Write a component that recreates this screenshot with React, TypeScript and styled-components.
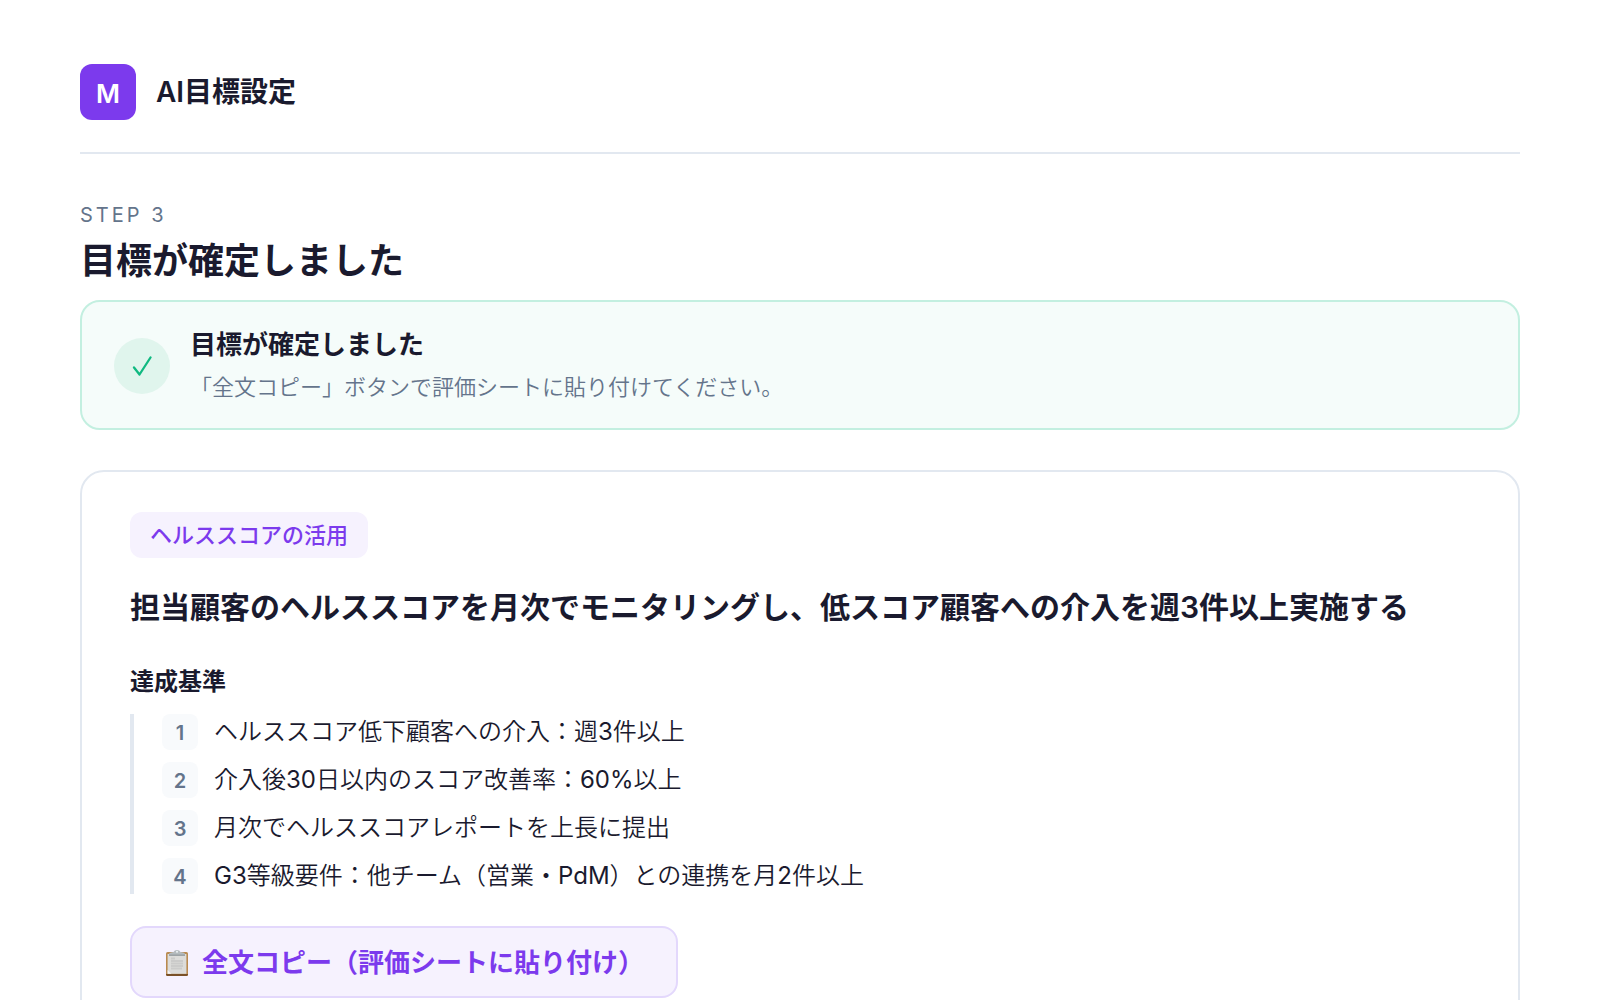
import React from 'react';
import styled, { createGlobalStyle } from 'styled-components';

const GlobalStyle = createGlobalStyle`
  *, *::before, *::after { box-sizing: border-box; }
  body {
    margin: 0;
    background: #ffffff;
    color: #1a1a2e;
    font-family: Inter, "Noto Sans CJK JP", sans-serif;
    -webkit-font-smoothing: antialiased;
  }
  h1, h2, h3, p, ol { margin: 0; padding: 0; }
`;

const Page = styled.div`
  padding: 64px 80px;
`;

const Header = styled.header`
  display: flex;
  align-items: center;
  gap: 20px;
  padding-bottom: 32px;
  border-bottom: 2px solid #e2e8f0;
`;

const Logo = styled.div`
  display: flex;
  align-items: center;
  justify-content: center;
  width: 56px;
  height: 56px;
  padding-top: 4px;
  border-radius: 12px;
  background: #7c3aed;
  color: #ffffff;
  font-size: 26px;
  line-height: 32px;
  font-weight: 600;
`;

const AppName = styled.p`
  font-size: 28px;
  line-height: 40px;
  font-weight: 600;
`;

const StepLabel = styled.p`
  margin-top: 48px;
  color: #64748b;
  font-size: 20px;
  line-height: 26px;
  letter-spacing: 3px;
`;

const PageTitle = styled.h1`
  margin-top: 9px;
  font-size: 36px;
  line-height: 48px;
  font-weight: 600;
`;

const Banner = styled.section`
  display: flex;
  align-items: center;
  gap: 20px;
  margin-top: 15px;
  padding: 25px 32px 24px;
  border: 2px solid #c3efe0;
  border-radius: 20px;
  background: #f5fcfa;
`;

const CheckCircle = styled.div`
  display: flex;
  align-items: center;
  justify-content: center;
  width: 56px;
  height: 56px;
  border-radius: 50%;
  background: #e0f5ed;
`;

const BannerTitle = styled.h2`
  font-size: 26px;
  line-height: 36px;
  font-weight: 600;
`;

const BannerText = styled.p`
  margin-top: 7px;
  color: #64748b;
  font-size: 22px;
  line-height: 34px;
  font-weight: 350;
`;

const Card = styled.article`
  display: flex;
  flex-direction: column;
  align-items: flex-start;
  margin-top: 40px;
  padding: 40px 48px;
  border: 2px solid #e2e8f0;
  border-radius: 24px;
`;

const Tag = styled.span`
  padding: 6px 20px;
  border-radius: 12px;
  background: #f6f2fe;
  color: #7c3aed;
  font-size: 22px;
  line-height: 34px;
  font-weight: 500;
`;

const GoalTitle = styled.h2`
  margin-top: 25px;
  font-size: 30px;
  line-height: 48px;
  font-weight: 600;
`;

const CriteriaLabel = styled.h3`
  margin-top: 33px;
  font-size: 24px;
  line-height: 36px;
  font-weight: 600;
`;

const CriteriaList = styled.ol`
  display: flex;
  flex-direction: column;
  gap: 12px;
  && {
    margin-top: 14px;
    padding-left: 28px;
  }
  border-left: 4px solid #e2e8f0;
  list-style: none;
`;

const Criterion = styled.li`
  display: flex;
  align-items: center;
  gap: 16px;
  font-size: 24px;
  line-height: 36px;
  font-weight: 350;
`;

const Latin = styled.span`
  font-weight: 400;
`;

const CriterionNumber = styled.span`
  width: 36px;
  height: 36px;
  padding-top: 1px;
  border-radius: 8px;
  background: #f8fafc;
  color: #64748b;
  font-size: 20px;
  font-weight: 600;
  text-align: center;
`;

const CopyButton = styled.button`
  display: flex;
  align-items: center;
  gap: 12px;
  margin-top: 32px;
  padding: 15px 32px 13px;
  border: 2px solid #e3d8fc;
  border-radius: 16px;
  background: #f6f2fe;
  color: #7c3aed;
  font-family: inherit;
  font-size: 26px;
  line-height: 40px;
  font-weight: 600;
  cursor: pointer;
`;

const criteria = [
  'ヘルススコア低下顧客への介入：週3件以上',
  '介入後30日以内のスコア改善率：60%以上',
  '月次でヘルススコアレポートを上長に提出',
  'G3等級要件：他チーム（営業・PdM）との連携を月2件以上',
];

const withLatin = (text: string) =>
  text
    .split(/([A-Za-z0-9%]+)/)
    .map((part, i) => (i % 2 === 1 ? <Latin key={i}>{part}</Latin> : part));

const CheckIcon = () => (
  <svg width="20" height="20" viewBox="0 0 20 20" fill="none" aria-hidden="true">
    <path
      d="M2 11.5 L7.5 18.5 L18.5 1.5"
      stroke="#10b981"
      strokeWidth="2.3"
      strokeLinecap="round"
      strokeLinejoin="round"
    />
  </svg>
);

const ClipboardIcon = () => (
  <svg width="26" height="28" viewBox="0 0 26 28" aria-hidden="true">
    <rect x="2" y="3" width="22" height="24" rx="1.6" fill="#b98a50" />
    <path d="M2 25h22v.6a1.4 1.4 0 0 1-1.4 1.4H3.4A1.4 1.4 0 0 1 2 25.6z" fill="#7a5128" />
    <rect x="3.6" y="5" width="18.8" height="19.8" fill="#dcdcda" />
    <path d="M3.6 21l3.8 3.8H3.6z" fill="#f4f4f2" />
    <path d="M7 9.500h4M7 12h12M7 14.500h12M7 17h12M7 19.500h11" stroke="#cbcbca" strokeWidth="1.8" />
    <path d="M5 6.500V5.200Q5 3.700 7 3.500L9.500 3Q10.500 1 13 1t3.500 2l2.500.5q2 .2 2 1.700v1.300z" fill="#b4bbbe" />
    <circle cx="13" cy="2.800" r="1" fill="#eef3f5" />
    <path d="M5 6.200h16" stroke="#7b8285" strokeWidth="0.8" />
  </svg>
);

export default function App() {
  return (
    <>
      <GlobalStyle />
      <Page lang="ja">
        <Header>
          <Logo>M</Logo>
          <AppName>AI目標設定</AppName>
        </Header>
        <main>
          <StepLabel>STEP 3</StepLabel>
          <PageTitle>目標が確定しました</PageTitle>
          <Banner role="status">
            <CheckCircle>
              <CheckIcon />
            </CheckCircle>
            <div>
              <BannerTitle>目標が確定しました</BannerTitle>
              <BannerText>「全文コピー」ボタンで評価シートに貼り付けてください。</BannerText>
            </div>
          </Banner>
          <Card>
            <Tag>ヘルススコアの活用</Tag>
            <GoalTitle>
              担当顧客のヘルススコアを月次でモニタリングし、低スコア顧客への介入を週3件以上実施する
            </GoalTitle>
            <CriteriaLabel>達成基準</CriteriaLabel>
            <CriteriaList>
              {criteria.map((text, i) => (
                <Criterion key={text}>
                  <CriterionNumber>{i + 1}</CriterionNumber>
                  <span>{withLatin(text)}</span>
                </Criterion>
              ))}
            </CriteriaList>
            <CopyButton type="button">
              <ClipboardIcon />
              全文コピー（評価シートに貼り付け）
            </CopyButton>
          </Card>
        </main>
      </Page>
    </>
  );
}
